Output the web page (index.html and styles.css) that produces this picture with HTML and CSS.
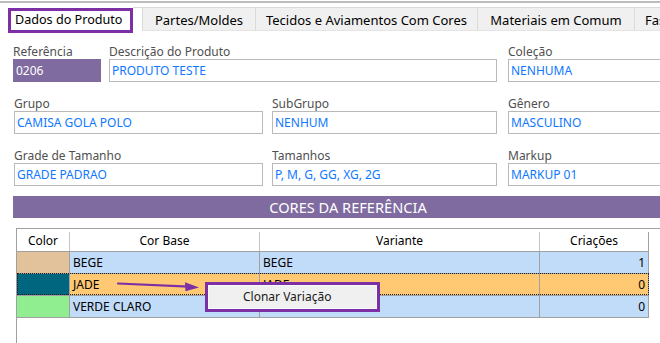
FILE: index.html
```html
<!DOCTYPE html>
<html>
<head>
<meta charset="utf-8">
<link rel="stylesheet" href="styles.css">
</head>
<body>
<div class="app">
  <div class="topline"></div>
  <div class="tabstrip">
    <div class="tab active">Dados do Produto</div>
    <div class="tabs-rest">
      <div class="tab t1">Partes/Moldes</div>
      <div class="tab t2">Tecidos e Aviamentos Com Cores</div>
      <div class="tab t3">Materiais em Comum</div>
      <div class="tab t4">Fases</div>
    </div>
  </div>

  <div class="form">
    <div class="frow">
      <div class="field w-ref gap8"><div class="lbl">Referência</div><div class="box ref">0206</div></div>
      <div class="field w-desc gap11"><div class="lbl">Descrição do Produto</div><div class="box">PRODUTO TESTE</div></div>
      <div class="field w-last"><div class="lbl">Coleção</div><div class="box">NENHUMA</div></div>
    </div>
    <div class="frow">
      <div class="field w-c1 gap9 ind1"><div class="lbl">Grupo</div><div class="box">CAMISA GOLA POLO</div></div>
      <div class="field w-c2 gap11"><div class="lbl">SubGrupo</div><div class="box">NENHUM</div></div>
      <div class="field w-last"><div class="lbl">Gênero</div><div class="box">MASCULINO</div></div>
    </div>
    <div class="frow">
      <div class="field w-c1 gap9 ind1"><div class="lbl">Grade de Tamanho</div><div class="box">GRADE PADRAO</div></div>
      <div class="field w-c2 gap11"><div class="lbl">Tamanhos</div><div class="box">P, M, G, GG, XG, 2G</div></div>
      <div class="field w-last"><div class="lbl">Markup</div><div class="box">MARKUP 01</div></div>
    </div>
  </div>

  <div class="banner">CORES DA REFERÊNCIA</div>

  <div class="grid">
    <div class="grow head">
      <div class="cell c-color">Color</div>
      <div class="cell c-base">Cor Base</div>
      <div class="cell c-var">Variante</div>
      <div class="cell c-cri">Criações</div>
    </div>
    <div class="grow data">
      <div class="cell c-color sw-bege"></div>
      <div class="cell c-base">BEGE</div>
      <div class="cell c-var">BEGE</div>
      <div class="cell c-cri num">1</div>
    </div>
    <div class="grow data selected">
      <div class="cell c-color sw-jade"></div>
      <div class="cell c-base">JADE</div>
      <div class="cell c-var">JADE</div>
      <div class="cell c-cri num">0</div>
    </div>
    <div class="grow data">
      <div class="cell c-color sw-verde"></div>
      <div class="cell c-base">VERDE CLARO</div>
      <div class="cell c-var">VERDE CLARO</div>
      <div class="cell c-cri num">0</div>
    </div>
  </div>

  <svg class="arrow" width="660" height="343" viewBox="0 0 660 343">
    <line x1="118" y1="283.5" x2="189" y2="286.6" stroke="#7d2fa6" stroke-width="2.2" stroke-linecap="round"/>
    <polygon points="185,282.3 199,287.4 185.4,291.2" fill="#7d2fa6"/>
  </svg>

  <div class="menu"><div class="menu-inner">Clonar Variação</div></div>
</div>
</body>
</html>
```

FILE: styles.css
```css
html, body {
  margin: 0;
  padding: 0;
  overflow: hidden;
  background: #ffffff;
}
.app {
  position: relative;
  width: 660px;
  height: 343px;
  overflow: hidden;
  font-family: "Noto Sans", "Open Sans", sans-serif;
  font-size: 12px;
  color: #000;
}
.topline {
  margin-top: 1px;
  height: 2px;
  background: #bdbdbd;
}
.tabstrip {
  margin-top: 4px;
  display: flex;
  align-items: flex-start;
  padding-left: 8px;
  height: 26px;
}
.tab {
  box-sizing: border-box;
  font-size: 13px;
  white-space: nowrap;
  overflow: hidden;
  flex: none;
}
.tab.active {
  margin-top: 1px;
  width: 125px;
  height: 25px;
  border: 3px solid #7d2fa6;
  background: #fff;
  line-height: 18px;
  padding-left: 4px;
  font-size: 12.6px;
}
.tabs-rest {
  flex: 1;
  min-width: 0;
  overflow: hidden;
  display: flex;
  border-top: 1px solid #dadada;
  padding-left: 9px;
}
.tabs-rest .tab {
  height: 23px;
  background: #f0f0f0;
  border-right: 1px solid #dadada;
  border-bottom: 1px solid #e4e4e4;
  text-align: center;
  padding-top: 2px;
  line-height: 20px;
}
.tabs-rest .t1 { width: 114px; border-left: 1px solid #dadada; }
.tabs-rest .t2 { width: 222px; }
.tabs-rest .t3 { width: 157px; }
.tabs-rest .t4 { width: 60px; text-align: left; padding-left: 10px; }

.form {
  margin-top: 11px;
  padding-left: 13px;
  display: flex;
  flex-direction: column;
  gap: 14px;
}
.frow {
  display: flex;
}
.field { flex: none; }
.gap8 { margin-right: 8px; }
.gap9 { margin-right: 9px; }
.gap11 { margin-right: 11px; }
.ind1 { margin-left: 1px; }
.w-ref { width: 88px; }
.w-desc { width: 388px; }
.w-c1 { width: 249px; }
.w-c2 { width: 225px; }
.w-last { width: 220px; }
.lbl {
  height: 15px;
  line-height: 15px;
  color: #505050;
  white-space: nowrap;
}
.box {
  box-sizing: border-box;
  height: 23px;
  border: 1px solid #b9b9b9;
  line-height: 21px;
  padding-left: 2px;
  color: #0f78ff;
  white-space: nowrap;
  overflow: hidden;
}
.box.ref {
  border: none;
  background: #7f6b9f;
  color: #ffffff;
  line-height: 23px;
  padding-left: 3px;
}

.banner {
  margin: 10px 0 0 13px;
  width: 670px;
  height: 22px;
  line-height: 22px;
  background: #7f6b9f;
  color: #ffffff;
  text-align: center;
  font-size: 14.6px;
}

.grid {
  margin: 10px 0 0 16px;
  width: 700px;
  height: 200px;
  border-left: 1px solid #a0a0a0;
  border-top: 1px solid #a0a0a0;
}
.grow {
  display: flex;
}
.cell {
  box-sizing: border-box;
  flex: none;
  border-right: 1px solid #a0a0a0;
  white-space: nowrap;
  overflow: hidden;
}
.c-color { width: 53px; }
.c-base { width: 190px; }
.c-var { width: 280px; }
.c-cri { width: 109px; }

.head {
  padding-top: 3px;
  height: 22px;
  box-sizing: border-box;
}
.head .cell {
  height: 19px;
  line-height: 17px;
  text-align: center;
  border-right-color: #c4c4c4;
}
.head .c-cri { border-right-color: #a0a0a0; }

.data .cell {
  height: 22px;
  line-height: 21px;
  border-top: 1px solid #a0a0a0;
  background: #c0dcf8;
  padding-left: 3px;
}
.data:last-child .cell { border-bottom: 1px solid #a0a0a0; height: 23px; }
.data.selected .cell { background: #ffc872; }
.data.selected { outline: 1px dotted #222; outline-offset: -1px; width: 632px; }
.data .num { text-align: right; padding-right: 3px; }
.data .sw-bege { background: #e2c29b; }
.data .sw-jade, .data.selected .sw-jade { background: #006680; }
.data .sw-verde { background: #90ee90; }

.arrow {
  position: absolute;
  left: 0;
  top: 0;
  pointer-events: none;
}
.menu {
  position: absolute;
  left: 205px;
  top: 282px;
  width: 175px;
  height: 30px;
  box-sizing: border-box;
  border: 3px solid #7d2fa6;
  background: #f0f0f0;
}
.menu-inner {
  box-sizing: border-box;
  height: 24px;
  border: 1px solid #fafafa;
  padding-left: 34px;
  line-height: 21px;
  color: #1a1a1a;
  white-space: nowrap;
}
```
